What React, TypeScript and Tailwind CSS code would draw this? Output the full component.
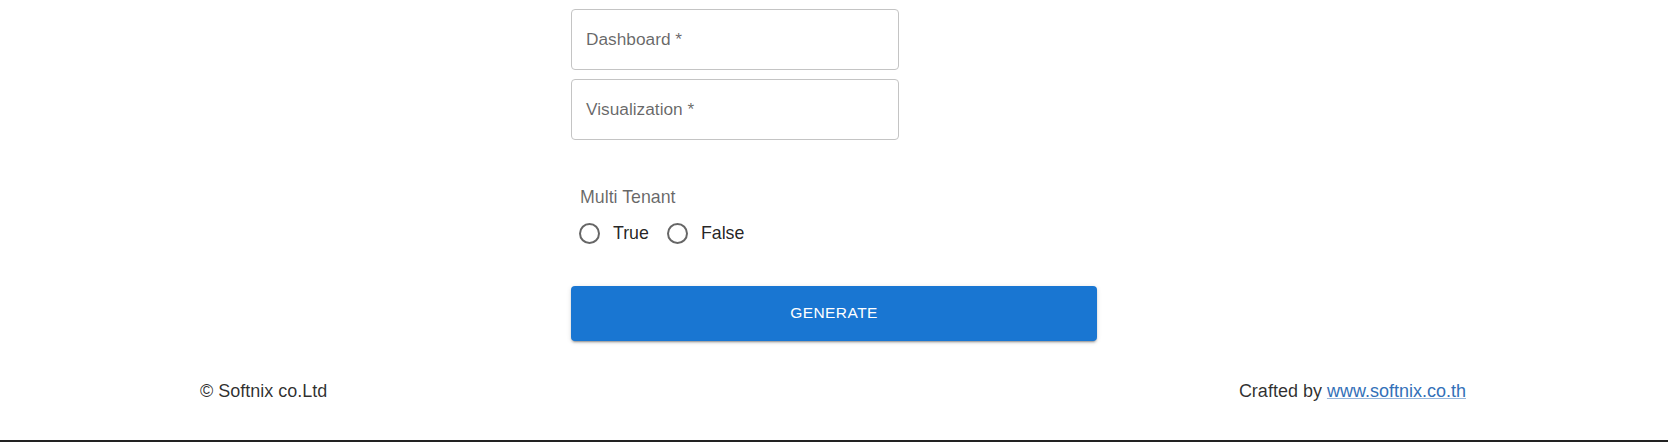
import React from "react";

function Field({ label }: { label: string }) {
  return (
    <div className="h-[61px] w-[328px] rounded-[4px] border border-[#c4c4c4] flex items-center pl-[14px] pb-[2px]">
      <span className="text-[17.3px] leading-[24px] text-[rgba(0,0,0,0.6)]">{label}</span>
    </div>
  );
}

function Radio({ label }: { label: string }) {
  return (
    <div className="flex items-center">
      <span className="block w-[21px] h-[21px] rounded-full border-[2px] border-[rgba(0,0,0,0.6)]" />
      <span className="ml-[13px] text-[17.8px] leading-[24px] text-[rgba(0,0,0,0.87)]">{label}</span>
    </div>
  );
}

export default function App() {
  return (
    <div className="h-[442px] w-full bg-white flex flex-col font-['Liberation_Sans',Arial,sans-serif]">
      <div className="w-[526px] mx-auto pt-[9px] flex flex-col">
        <Field label="Dashboard *" />
        <div className="mt-[9px]">
          <Field label="Visualization *" />
        </div>
        <div className="mt-[45px] pl-[9px] text-[17.8px] leading-[24px] text-[rgba(0,0,0,0.6)]">Multi Tenant</div>
        <div className="mt-[3px] h-[42px] pl-[8px] flex items-center gap-[18px]">
          <Radio label="True" />
          <Radio label="False" />
        </div>
        <button className="mt-[32px] h-[55px] w-full rounded-[4px] bg-[#1976d2] text-white font-['Liberation_Sans',Arial,sans-serif] text-[15.5px] tracking-[0.45px] uppercase pb-[2px] shadow-[0px_3px_1px_-2px_rgba(0,0,0,0.2),0px_2px_2px_0px_rgba(0,0,0,0.14),0px_1px_5px_0px_rgba(0,0,0,0.12)]">
          Generate
        </button>
      </div>
      <div className="mt-[38px] px-[200px] flex justify-between items-center h-[24px] text-[18px] leading-[24px] text-[rgba(0,0,0,0.82)]">
        <span>© Softnix co.Ltd</span>
        <span className="pr-[2px]">
          Crafted by{" "}
          <a href="#" className="text-[#3370b8] underline decoration-[rgba(51,112,184,0.5)]">
            www.softnix.co.th
          </a>
        </span>
      </div>
      <div className="flex-1" />
      <div className="h-[2px] bg-[#222]" />
    </div>
  );
}
